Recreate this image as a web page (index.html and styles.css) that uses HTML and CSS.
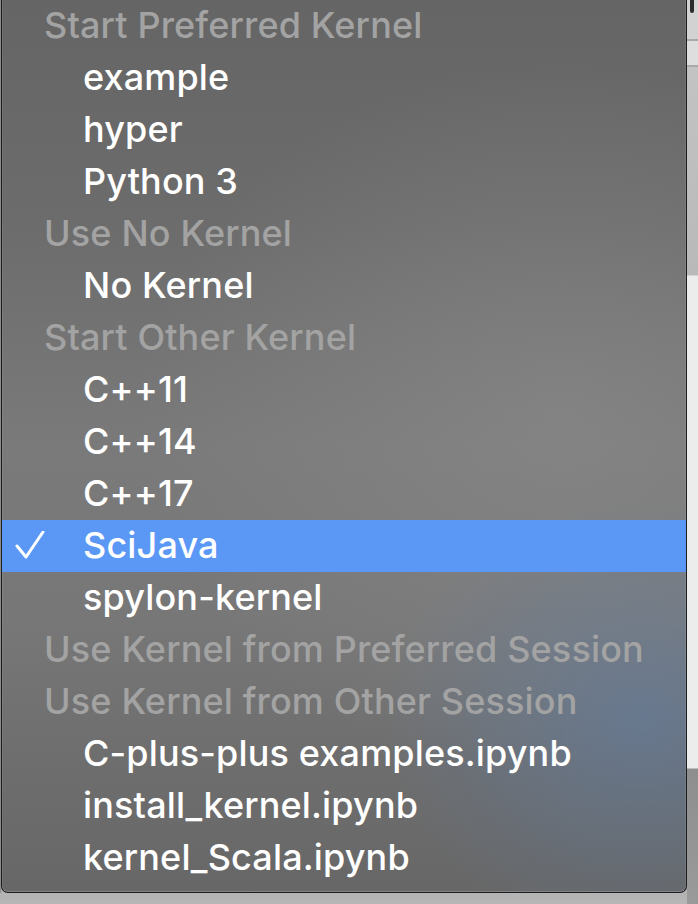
FILE: index.html
```html
<!DOCTYPE html>
<html>
<head>
<meta charset="utf-8">
<link rel="stylesheet" href="styles.css">
</head>
<body>
<div class="stage">
  <div class="edge"></div>
  <div class="menu">
    <div class="row head">Start Preferred Kernel</div>
    <div class="row item">example</div>
    <div class="row item">hyper</div>
    <div class="row item">Python 3</div>
    <div class="row head">Use No Kernel</div>
    <div class="row item">No Kernel</div>
    <div class="row head">Start Other Kernel</div>
    <div class="row item">C++11</div>
    <div class="row item">C++14</div>
    <div class="row item">C++17</div>
    <div class="row item selected">
      <svg class="check" width="30" height="30" viewBox="0 0 30 30"><polyline points="2,15 11,26 28,1" fill="none" stroke="#fff" stroke-width="3" stroke-linecap="round" stroke-linejoin="round"/></svg>
      SciJava
    </div>
    <div class="row item">spylon-kernel</div>
    <div class="row head">Use Kernel from Preferred Session</div>
    <div class="row head">Use Kernel from Other Session</div>
    <div class="row item">C-plus-plus examples.ipynb</div>
    <div class="row item">install_kernel.ipynb</div>
    <div class="row item">kernel_Scala.ipynb</div>
  </div>
  <div class="side">
    <div class="mark"></div>
  </div>
</div>
</body>
</html>
```
FILE: styles.css
```css
html, body {
  margin: 0;
  padding: 0;
}
body {
  width: 698px;
  height: 904px;
  overflow: hidden;
  background: linear-gradient(180deg, #9a9a9a 0%, #a4a4a4 90%, #b6b6b6 100%);
  font-family: Inter, "Noto Sans", "Liberation Sans", sans-serif;
}
.stage {
  display: flex;
  height: 904px;
  align-items: flex-start;
}
.edge {
  width: 1px;
  height: 893px;
  background: #8c8c8c;
}
.menu {
  position: relative;
  width: 686px;
  height: 893px;
  box-sizing: border-box;
  border: 1px solid #1c1c1c;
  border-top: none;
  border-radius: 0 0 7px 7px;
  box-shadow: inset 0 -1px 0 rgba(255,255,255,0.18), inset 1px 0 0 rgba(255,255,255,0.08), inset -1px 0 0 rgba(255,255,255,0.08);
  background:
    radial-gradient(ellipse 260px 220px at 640px 720px, rgba(95,125,165,0.55), rgba(95,125,165,0) 100%),
    radial-gradient(ellipse 420px 360px at 560px 420px, rgba(140,140,140,0.55), rgba(140,140,140,0) 100%),
    linear-gradient(180deg, #656565 0%, #6c6c6c 25%, #7a7a7a 50%, #777777 70%, #6e6e6e 85%, #676767 100%);
}
.row {
  box-sizing: border-box;
  height: 52px;
  line-height: 50px;
  padding-bottom: 2px;
  font-size: 36px;
  font-weight: 500;
  letter-spacing: 0.15px;
  white-space: nowrap;
  display: flex;
  align-items: center;
}
.head {
  color: #a3a3a3;
  padding-left: 42px;
}
.item {
  color: #ffffff;
  padding-left: 81px;
}
.selected {
  background: #5b98f6;
  position: relative;
}
.check {
  position: absolute;
  left: 13px;
  top: 11px;
}
.side {
  flex: 1;
  height: 904px;
  position: relative;
  background: linear-gradient(180deg,
    #d2d2d2 0px, #d2d2d2 39px,
    #a9a9a9 39px, #a9a9a9 41px,
    #dedede 41px, #dedede 65px,
    #a9a9a9 65px, #a9a9a9 67px,
    #c3c3c3 67px, #b9b9b9 275px,
    #ececec 276px, #ececec 768px,
    #8e8e8e 769px, #9a9a9a 904px);
}
.mark {
  position: absolute;
  left: 3px;
  top: 0;
  width: 4px;
  height: 13px;
  border-radius: 0 0 3px 3px;
  background: #2a2a2a;
}
```
